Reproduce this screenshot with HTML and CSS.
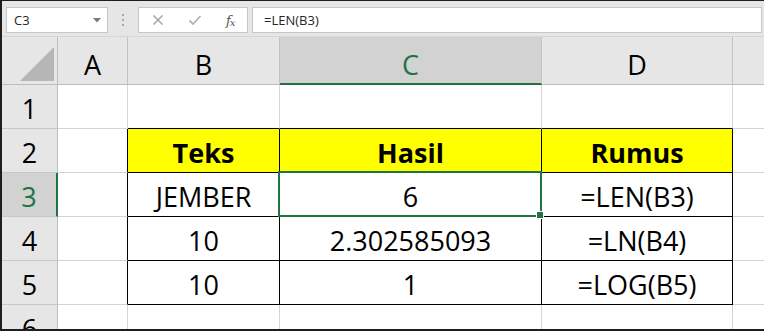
FILE: index.html
```html
<!DOCTYPE html>
<html>
<head>
<meta charset="utf-8">
<link rel="stylesheet" href="styles.css">
</head>
<body>
<div class="window">
  <div class="toolbar">
    <div class="namebox">
      <span class="name">C3</span>
      <svg class="drop" width="8" height="5" viewBox="0 0 8 5"><polygon points="0,0 8,0 4,4.5" fill="#7a7a7a"/></svg>
    </div>
    <div class="dots"><span></span><span></span><span></span></div>
    <div class="fbtns">
      <svg class="icon-x" width="12" height="12" viewBox="0 0 12 12"><path d="M1.5 1.5 L10.5 10.5 M10.5 1.5 L1.5 10.5" stroke="#a6a6a6" stroke-width="1.5" fill="none"/></svg>
      <svg class="icon-check" width="14" height="12" viewBox="0 0 14 12"><path d="M1.5 6.5 L5 10 L12.5 2" stroke="#b3b3b3" stroke-width="1.8" fill="none"/></svg>
      <span class="fx">f<sub>x</sub></span>
    </div>
    <div class="finput">=LEN(B3)</div>
  </div>
  <div class="sheet">
    <div class="corner"><svg width="34" height="34" viewBox="0 0 34 34"><polygon points="34,0 34,34 0,34" fill="#b6b6b6"/></svg></div>
    <div class="ch">A</div>
    <div class="ch">B</div>
    <div class="ch sel">C</div>
    <div class="ch">D</div>
    <div class="ch last"></div>

    <div class="rh">1</div>
    <div class="c"></div>
    <div class="c tt"></div>
    <div class="c tt"></div>
    <div class="c tt"></div>
    <div class="c last"></div>

    <div class="rh">2</div>
    <div class="c tr"></div>
    <div class="c t y b">Teks</div>
    <div class="c t y b">Hasil</div>
    <div class="c t y b">Rumus</div>
    <div class="c last"></div>

    <div class="rh sel">3</div>
    <div class="c tr"></div>
    <div class="c t">JEMBER</div>
    <div class="c t active">6<div class="selbox"><span class="handle"></span></div></div>
    <div class="c t">=LEN(B3)</div>
    <div class="c last"></div>

    <div class="rh">4</div>
    <div class="c tr"></div>
    <div class="c t">10</div>
    <div class="c t">2.302585093</div>
    <div class="c t">=LN(B4)</div>
    <div class="c last"></div>

    <div class="rh">5</div>
    <div class="c tr"></div>
    <div class="c t">10</div>
    <div class="c t">1</div>
    <div class="c t">=LOG(B5)</div>
    <div class="c last"></div>

    <div class="rh">6</div>
    <div class="c"></div>
    <div class="c"></div>
    <div class="c"></div>
    <div class="c"></div>
    <div class="c last"></div>
  </div>
</div>
</body>
</html>
```
FILE: styles.css
```css
* { box-sizing: border-box; }
html, body { margin: 0; padding: 0; background: #fff; }
.window {
  width: 764px;
  height: 331px;
  border-top: 1px solid #1e1e1e;
  border-left: 2px solid #1e1e1e;
  border-bottom: 2px solid #1e1e1e;
  display: flex;
  flex-direction: column;
  overflow: hidden;
  background: #e6e6e6;
  font-family: "Open Sans", "Noto Sans", sans-serif;
}
.toolbar {
  height: 36px;
  flex: none;
  display: flex;
  align-items: flex-start;
  padding: 6px 2px 0 4px;
  border-bottom: 1px solid #d6d6d6;
  background: #e6e6e6;
}
.namebox {
  width: 102px;
  height: 26px;
  background: #fff;
  border: 1px solid #c6c6c6;
  display: flex;
  align-items: center;
  justify-content: space-between;
  padding: 0 6px 0 7px;
}
.name { font-size: 13px; color: #262626; }
.drop { margin-top: 1px; }
.dots {
  width: 30px;
  height: 26px;
  display: flex;
  flex-direction: column;
  align-items: center;
  justify-content: center;
  gap: 3px;
}
.dots span { width: 2px; height: 2px; background: #a8a8a8; display: block; }
.fbtns {
  width: 110px;
  height: 26px;
  background: #fff;
  border: 1px solid #c6c6c6;
  display: flex;
  align-items: center;
  padding-left: 13px;
}
.icon-x { margin-right: 24px; }
.icon-check { margin-right: 24px; }
.fx {
  font-family: "DejaVu Serif", "Liberation Serif", serif;
  font-style: italic;
  font-size: 13px;
  color: #555;
  letter-spacing: -1px;
}
.fx sub { font-size: 10px; vertical-align: -1px; }
.finput {
  flex: 1;
  height: 26px;
  margin-left: 4px;
  background: #fff;
  border: 1px solid #c6c6c6;
  font-size: 13px;
  color: #262626;
  line-height: 24px;
  padding-left: 11px;
}
.sheet {
  flex: 1;
  display: grid;
  grid-template-columns: 56px 70px 152px 262px 191px 1fr;
  grid-template-rows: 48px repeat(6, 44px);
  background: #fff;
  overflow: hidden;
}
.sheet > div {
  border-right: 1px solid #d4d4d4;
  border-bottom: 1px solid #d4d4d4;
  display: flex;
  align-items: center;
  justify-content: center;
  font-size: 27px;
  color: #000;
  padding-top: 3px;
}
.sheet > div.corner {
  background: #e6e6e6;
  border-right: 1px solid #bdbdbd;
  border-bottom: 1px solid #bdbdbd;
  align-items: flex-end;
  justify-content: flex-end;
  padding: 0 3px 3px 0;
}
.corner svg { display: block; }
.sheet > div.ch {
  background: #e6e6e6;
  border-right: 1px solid #c2c2c2;
  border-bottom: 1px solid #bdbdbd;
  padding-top: 8px;
}
.sheet > div.ch.sel {
  background: #d2d2d2;
  color: #217346;
  border-bottom: 2px solid #217346;
  padding-top: 9px;
}
.sheet > div.rh {
  background: #e6e6e6;
  border-right: 1px solid #bdbdbd;
  border-bottom: 1px solid #c8c8c8;
}
.sheet > div.rh.sel {
  background: #d2d2d2;
  color: #217346;
  border-right: 2px solid #217346;
}
.sheet > div.last { border-right: none; }
.sheet > div.tt { border-bottom-color: #000; }
.sheet > div.tr { border-right-color: #000; }
.sheet > div.t { border-right-color: #000; border-bottom-color: #000; }
.sheet > div.y { background: #ffff00; }
.sheet > div.b { font-weight: 700; }
.sheet > div.active { position: relative; }
.selbox {
  position: absolute;
  top: -2px;
  left: -2px;
  right: -1px;
  bottom: -1px;
  border: 2px solid #217346;
  pointer-events: none;
}
.handle {
  position: absolute;
  right: -4px;
  bottom: -4px;
  width: 6px;
  height: 6px;
  background: #217346;
  border: 1px solid #fff;
  box-sizing: content-box;
}
```
